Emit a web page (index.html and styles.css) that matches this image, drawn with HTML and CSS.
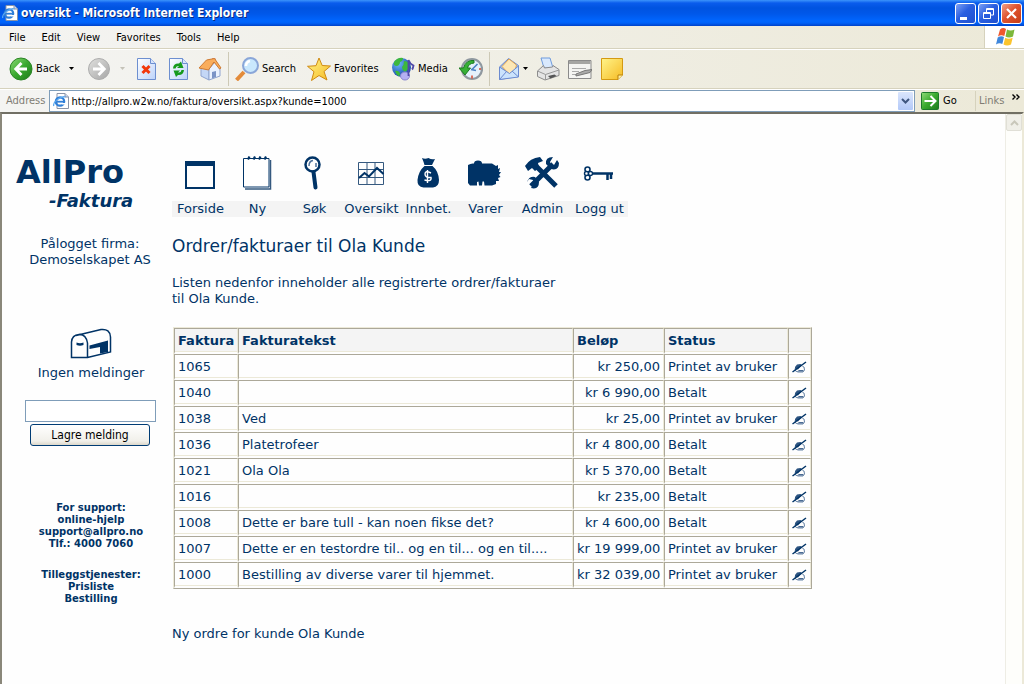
FILE: index.html
```
<!DOCTYPE html>
<html lang="no">
<head>
<meta charset="utf-8">
<title>oversikt</title>
<link rel="stylesheet" href="styles.css">
</head>
<body>
<svg class="defs" aria-hidden="true">
  <defs>
    <linearGradient id="gGreen" x1="0" y1="0" x2="1" y2="1"><stop offset="0" stop-color="#8fdc78"/><stop offset=".5" stop-color="#3aa92f"/><stop offset="1" stop-color="#1c7a1a"/></linearGradient>
    <linearGradient id="gGrey" x1="0" y1="0" x2="1" y2="1"><stop offset="0" stop-color="#e0e0de"/><stop offset="1" stop-color="#a6a6a6"/></linearGradient>
    <linearGradient id="gPage" x1="0" y1="0" x2="1" y2="1"><stop offset="0" stop-color="#ffffff"/><stop offset="1" stop-color="#bcd3fa"/></linearGradient>
    <linearGradient id="gGold" x1="0" y1="0" x2="1" y2="1"><stop offset="0" stop-color="#fff48a"/><stop offset="1" stop-color="#f6bb24"/></linearGradient>
    <radialGradient id="gGlobe" cx=".35" cy=".3" r=".8"><stop offset="0" stop-color="#6db6f5"/><stop offset="1" stop-color="#0c3fa5"/></radialGradient>
    <symbol id="iePage" viewBox="0 0 16 16"><path d="M4 .5h8l3.500 3.500v11.500H4z" fill="#fff" stroke="#8a94a8"/><path d="M12 .5V4h3.500" fill="#c9d6ee" stroke="#8a94a8"/><circle cx="7" cy="8.500" r="4.200" fill="none" stroke="#2f7fd8" stroke-width="2.200"/><path d="M4 8.700h7" stroke="#2f7fd8" stroke-width="1.800"/><path d="M9 10h4v1.500H9z" fill="#fff"/><path d="M.8 13C-.5 9 8 2.500 12.500 4" fill="none" stroke="#5aa7ee" stroke-width="1.300"/></symbol>
    <symbol id="hand" viewBox="0 0 15 12"><path d="M3 6 5 3.500 8.500 3l1.500 1-4 4.500-3-.5z" fill="#2b5380"/><path d="M3 7.500 3.500 10l2.500 1h5l1.500-2-.5-3-1.500-.5" fill="none" stroke="#6683a6"/><path d="M5 10.500h6l.5-1.500H7z" fill="#4a6b93"/><path d="M.5 11 14 1" stroke="#003366" stroke-width="1.500"/></symbol>
  </defs>
</svg>
<div class="window">
  <header class="titlebar">
    <svg class="i16" aria-hidden="true"><use href="#iePage"/></svg>
    <h1 class="title">oversikt - Microsoft Internet Explorer</h1>
    <div class="winbtns">
      <button class="winbtn" aria-label="Minimize"><svg viewBox="0 0 19 19"><path d="M4 13h7v3H4z" fill="#fff"/></svg></button>
      <button class="winbtn" aria-label="Restore"><svg viewBox="0 0 19 19"><path d="M7.500 8V4.500h7v6.500H12M7 5.500h8M4.500 8.500h7v6h-7zM4 9.500h8" fill="none" stroke="#fff"/></svg></button>
      <button class="winbtn winclose" aria-label="Close"><svg viewBox="0 0 19 19"><path d="m5 5 9 9M14 5l-9 9" stroke="#fff" stroke-width="2.200"/></svg></button>
    </div>
  </header>
  <div class="menubar">
    <button class="m">File</button><button class="m">Edit</button><button class="m">View</button><button class="m">Favorites</button><button class="m">Tools</button><button class="m">Help</button>
    <div class="flag"><svg viewBox="0 0 22 20" aria-hidden="true"><path d="M5 2.500q3-2.500 6-.5L9.300 9Q6 7.500 3 9.500z" fill="#f0582c"/><path d="M12 2.500q3.500 2 7.500 0L18 9.500q-4 2-7.500 0z" fill="#7cb83a"/><path d="M2.700 10.500q3.500-2 6.300-.5l-1.700 7q-3-1.500-6.300.5z" fill="#3f87dc"/><path d="M10.200 10.700q3.500 2 7.500 0L16 17.500q-4 2-7.500 0z" fill="#fbc42d"/></svg></div>
  </div>
  <div class="toolbar">
    <button class="tb"><svg class="i24" viewBox="0 0 24 24"><circle cx="12" cy="12" r="11" fill="url(#gGreen)" stroke="#2c8526"/><path d="M18 12H7m5.500-6L6.700 12l5.800 6" fill="none" stroke="#fff" stroke-width="2.800"/></svg>Back</button>
    <button class="drop" aria-label="Back history"><svg viewBox="0 0 7 4"><path d="M1 0h5L3.500 3z"/></svg></button>
    <button class="tb" aria-label="Forward"><svg class="i24" viewBox="0 0 24 24"><circle cx="12" cy="12" r="10.500" fill="url(#gGrey)" stroke="#adadad"/><path d="M6 12h11m-5.500-6 5.800 6-5.800 6" fill="none" stroke="#fff" stroke-width="2.800"/></svg></button>
    <button class="drop near off" aria-label="Forward history"><svg viewBox="0 0 7 4"><path d="M1 0h5L3.500 3z"/></svg></button>
    <button class="tb" aria-label="Stop"><svg class="i24" viewBox="0 0 24 24"><path d="M1.500 1.500h13l5 5v16h-18z" fill="url(#gPage)" stroke="#6d8fd0"/><path d="M14.500 1.500v5h5" fill="#d7e4fb" stroke="#6d8fd0"/><path d="m6.500 9 7 7M13.500 9l-7 7" stroke="#f2380c" stroke-width="3"/></svg></button>
    <button class="tb" aria-label="Refresh"><svg class="i24" viewBox="0 0 24 24"><path d="M1.500 1.500h13l5 5v16h-18z" fill="url(#gPage)" stroke="#6d8fd0"/><path d="M14.500 1.500v5h5" fill="#d7e4fb" stroke="#6d8fd0"/><path d="M5 11.500Q5.500 6 11 6.500L13 4.500l2.500 6.500H9l2-2q-3-.5-3.500 2.500zM16 13q-.5 5.500-6 5L8 20l-2.500-6.500H12l-2 2q3 .5 3.500-2.500z" fill="#169a1d"/></svg></button>
    <button class="tb" aria-label="Home"><svg class="i24" viewBox="0 0 24 24"><path d="M14 1.500h3.500V7H14z" fill="#b8452a"/><path d="M3 11v8l8 4V11L7 6z" fill="#c4d7f6" stroke="#8fa4cf"/><path d="m11 23 11-4v-8l-5-6-6 7z" fill="#eaf2fe" stroke="#8fa4cf"/><path d="M14 15v6.500l4-1.500v-6z" fill="#7b94c6"/><path d="M1 11 8.500 3 16.500 1.500 23 11l-1.500 1L16 5l-5.500 8z" fill="#f9ad5c" stroke="#cf7b33"/></svg></button>
    <span class="sep"></span>
    <button class="tb"><svg class="i24" viewBox="0 0 24 24"><path d="m9 15-7.500 8" stroke="#e38b3a" stroke-width="4"/><circle cx="15.500" cy="8.500" r="7.500" fill="#c9e8fd" stroke="#8aa6d8" stroke-width="2"/><path d="M11 9q0-4 4-5" fill="none" stroke="#fff" stroke-width="2.500"/></svg>Search</button>
    <button class="tb"><svg class="i24" viewBox="0 0 24 24"><path d="m12 1 3.200 7.500 8.300.5-6.500 5.500 3 8.500-8-4.500-7.500 5 2.500-8.800L.5 9.300 9 8.700z" fill="url(#gGold)" stroke="#cf8a12"/></svg>Favorites</button>
    <button class="tb"><svg class="i24" viewBox="0 0 24 24"><circle cx="10.500" cy="10.500" r="9.500" fill="url(#gGlobe)"/><path d="M3 5q4-5 9-4 0 3-3 4 0 3-3 4Q2 9 3 5zM13 4q4 0 5.500 4-1 5-4.500 7-3-2-3-5 2-2 2-6zM4 14q3-1 5 2 0 2-1 3.500Q5 18 4 14z" fill="#3db83c"/><ellipse cx="14" cy="19" rx="4.500" ry="4" fill="#b5b0f2" stroke="#8a85cf"/><path d="M17.500 19V3q1.500 4 5 5.500-.5 3-1.500 4" fill="none" stroke="#5149a8" stroke-width="1.800"/></svg>Media</button>
    <button class="tb" aria-label="History"><svg class="i24" viewBox="0 0 24 24"><circle cx="13" cy="12" r="10" fill="#e5f1fb" stroke="#8f989f" stroke-width="2.200"/><path d="M13 12.500 18.500 7M12 12.500l5 1" stroke="#4c82c4" stroke-width="1.600"/><path d="M13 18.500v3M20 12h2" stroke="#d9472b" stroke-width="1.500"/><path d="M15 3.500Q7 2.500 4.500 11H0l6 7 5.500-7H8.500q1-4.500 6.500-5z" fill="#37b035" stroke="#1c7a23"/></svg></button>
    <span class="sep"></span>
    <button class="tb" aria-label="Mail"><svg class="i24" viewBox="0 0 24 24"><path d="m1.500 10 9-8.500 10 7v11l-19 3z" fill="#9fc4f6" stroke="#6c8bd0"/><path d="m4 9.500 7-7.500 7.500 6-1.500 5.500-6 3.500z" fill="#fde7b5" stroke="#e2a34d"/><path d="m1.500 10 10 6.500L20.500 9v11l-19 2.500z" fill="#cbe3fc" stroke="#6c8bd0"/><path d="m2 22 6.500-7.500M20 19.500 14 14" stroke="#6c8bd0"/></svg></button>
    <button class="drop near" aria-label="Mail menu"><svg viewBox="0 0 7 4"><path d="M1 0h5L3.500 3z"/></svg></button>
    <button class="tb" aria-label="Print"><svg class="i24" viewBox="0 0 24 24"><path d="M5 1h9l3 10H8z" fill="#d9e9fd" stroke="#6f9bdd"/><path d="m1.500 14 6-5.500L8.500 11l8-1 .5-1.500 6 4v6L9 23l-7.500-3.500z" fill="#e4e4e4" stroke="#8c8c8c"/><path d="m1.500 14 8 3.500L23 13M9.500 17.500V23" fill="none" stroke="#999"/><path d="m12 19 6.500-1.500 2 1.500-6 2.500z" fill="#555"/></svg></button>
    <button class="tb" aria-label="Edit"><svg class="i24" viewBox="0 0 24 24"><path d="M.5 3.500h22.500v18H.5z" fill="#f4f4f2" stroke="#8b8b8b"/><path d="M1 4h21.500v3H1z" fill="#a5a5a3"/><path d="M4 11.500h14M4 14.500h7M4 17.500h5" stroke="#aaa"/><path d="m8 17 9-3.500 7-1-2 3-6 1.500-8 2z" fill="#aaa" stroke="#777"/></svg></button>
    <button class="tb" aria-label="Discuss"><svg class="i24" viewBox="0 0 24 24"><path d="M1.500 1.500h21v16.500l-4.500 4.500H1.500z" fill="url(#gGold)" stroke="#d49a12"/><path d="M18 22.500V18h4.500" fill="#fff0a0" stroke="#b77e0b"/></svg></button>
  </div>
  <form class="addressbar">
    <label class="grey" for="addr">Address</label>
    <div class="addrbox">
      <svg class="i16" aria-hidden="true"><use href="#iePage"/></svg>
      <input id="addr" class="addr" type="text" value="http://allpro.w2w.no/faktura/oversikt.aspx?kunde=1000">
      <button class="addrdrop" type="button" aria-label="Show addresses"><svg viewBox="0 0 9 6"><path d="m1 1 3.500 3.500L8 1" fill="none" stroke="#3f567f" stroke-width="2"/></svg></button>
    </div>
    <button class="go" type="button"><svg viewBox="0 0 18 18"><rect x=".5" y=".5" width="17" height="17" rx="1" fill="url(#gGreen)" stroke="#1c7a2a"/><path d="M3.500 9H14M9.500 4l5 5-5 5" fill="none" stroke="#fff" stroke-width="2"/></svg>Go</button>
    <span class="links grey">Links</span>
    <button class="more" type="button" aria-label="More links"><svg viewBox="0 0 8 6"><path d="m.5.500 2.500 2.500L.5 5.500M4.500.5 7 3 4.500 5.500" fill="none" stroke="#000" stroke-width="1.400"/></svg></button>
  </form>
  <div class="viewport">
    <div class="page">
      <aside class="side">
        <div class="brand">AllPro</div>
        <div class="product">-Faktura</div>
        <p class="login">Pålogget firma:<br>Demoselskapet AS</p>
        <div class="mail">
          <svg class="mailbox" viewBox="0 0 42 31" aria-hidden="true"><path d="M1.500 29.500V14Q2 7 9 6.500T17.500 15v14.500zM6 7.500 31 1.500q9-1 9.500 7.500V24l-23 5.500" fill="none" stroke="#003366" stroke-width="1.500"/><path d="M6.500 14.500q3.500 1.500 7 0V17q-3.500 1.500-7 0zM19.500 17.500 38 12.500V24l-8 1.500V19l-10.500 2z" fill="#003366"/></svg>
          <a href="#meldinger">Ingen meldinger</a>
        </div>
        <form class="note">
          <input class="field" type="text" aria-label="Melding">
          <button class="save" type="button">Lagre melding</button>
        </form>
        <div class="help">For support:<br><a href="#hjelp">online-hjelp</a><br><a href="#epost">support@allpro.no</a><br>Tlf.: 4000 7060</div>
        <div class="help">Tilleggstjenester:<br><a href="#prisliste">Prisliste</a><br><a href="#bestilling">Bestilling</a></div>
      </aside>
      <main class="main">
        <nav class="nav">
          <a class="navitem" href="#forside"><svg class="nicon" viewBox="0 0 40 40"><path d="M5 7h30v28H5zM7 12v21h26V12z" fill="#003366" fill-rule="evenodd"/></svg><span class="navlabel">Forside</span></a>
          <a class="navitem" href="#ny"><svg class="nicon" viewBox="0 0 40 40"><path d="M6.500 4.500h25.500v28.500H6.500z" fill="#fff" stroke="#003366"/><path d="M8 35h25.500V6" fill="none" stroke="#35597f" stroke-width="1.500"/><path d="m11 5.500 1.500-3M16.500 5.500l1.500-3M22 5.500l1.500-3M27.500 5.500l1.500-3" stroke="#003366" stroke-width="2.200"/></svg><span class="navlabel">Ny</span></a>
          <a class="navitem" href="#sok"><svg class="nicon" viewBox="0 0 40 40"><ellipse cx="18.500" cy="10.500" rx="7" ry="7" fill="none" stroke="#003366" stroke-width="2.500"/><path d="M15 12q0-5 4-5.500M22 9v4" fill="none" stroke="#4e719a" stroke-width="1.500"/><path d="m19.500 18 2 15.500" stroke="#003366" stroke-width="4" stroke-linecap="round"/></svg><span class="navlabel">Søk</span></a>
          <a class="navitem" href="#oversikt"><svg class="nicon" viewBox="0 0 40 40"><path d="M7.500 8.500h25v22h-25zM16 8v22M24 8v22M8 15.500h24M8 23.500h24" fill="none" stroke="#35597f"/><path d="m8 24 5.500-5 4.500 3.500L26 14l6.500 6" fill="none" stroke="#003366" stroke-width="2"/></svg><span class="navlabel">Oversikt</span></a>
          <a class="navitem" href="#innbet"><svg class="nicon" viewBox="0 0 40 40"><path d="M14 4q3 1.500 6.500 0 3 2 6.500 1-1.500 3-3 6h-7.500q-1-3.500-2.500-7zM16.500 12h8q6 5 6.500 14 0 7-6 7.500H15.500Q9 33 9.500 26q1-9 7-14z" fill="#003366"/><path d="M23 19q-6-3-6 1t6 3.500q1 4.500-6.500 2.500M19.500 16v13" fill="none" stroke="#fff" stroke-width="1.400"/></svg><span class="navlabel">Innbet.</span></a>
          <a class="navitem" href="#varer"><svg class="nicon" viewBox="0 0 40 40"><path d="M3 11q3-2 6-1.500 0-3 4-3t4 3h10l4 2.500 2-1v4l2-1-1 4h2l-2 3 1.500 2-2.500 1 1 3h-3v3l-4 1.500H19.500l-.5-4h-1.500l-.5 4h-3l-.5-4-1.500.5v3.500L5 31.500 3 29z" fill="#003366"/></svg><span class="navlabel">Varer</span></a>
          <a class="navitem" href="#admin"><svg class="nicon" viewBox="0 0 40 40"><path d="m13 11 21 21M31 10 9 32" stroke="#003366" stroke-width="5"/><path d="M3 12Q8 4 18 3l3 4-5 2 1 5-4 3-3-3-4 3zM35 6l-3 5h-3l-1-3 3-5q-8 0-7 7l5 5q8 2 8-6zM7 25l4 1 1 3-3 5q8 2 8-6l-4-5q-6-1-8 5z" fill="#003366"/></svg><span class="navlabel">Admin</span></a>
          <a class="navitem" href="#loggut"><svg class="nicon" viewBox="0 0 40 40"><path d="M13 19.500h21" stroke="#003366" stroke-width="2.500"/><path d="M28.500 20v6M32 20v5" stroke="#003366" stroke-width="2.500"/><circle cx="8.500" cy="15.500" r="2.500" fill="none" stroke="#003366" stroke-width="1.600"/><circle cx="8.500" cy="23.500" r="2.500" fill="none" stroke="#003366" stroke-width="1.600"/><circle cx="7.500" cy="19.500" r="2" fill="#fff" stroke="#003366" stroke-width="1.400"/><circle cx="11.500" cy="19.500" r="2" fill="#fff" stroke="#003366" stroke-width="1.400"/></svg><span class="navlabel">Logg ut</span></a>
        </nav>
        <h2 class="heading">Ordrer/fakturaer til Ola Kunde</h2>
        <p class="intro">Listen nedenfor inneholder alle registrerte ordrer/fakturaer<br>til Ola Kunde.</p>
        <table class="orders">
          <colgroup><col class="c-no"><col class="c-text"><col class="c-sum"><col class="c-status"><col class="c-edit"></colgroup>
          <thead><tr><th>Faktura</th><th>Fakturatekst</th><th>Beløp</th><th>Status</th><th></th></tr></thead>
          <tbody>
            <tr><td>1065</td><td></td><td class="sum">kr 250,00</td><td>Printet av bruker</td><td><a href="#o1065" aria-label="Rediger 1065"><svg class="hand"><use href="#hand"/></svg></a></td></tr>
            <tr><td>1040</td><td></td><td class="sum">kr 6 990,00</td><td>Betalt</td><td><a href="#o1040" aria-label="Rediger 1040"><svg class="hand"><use href="#hand"/></svg></a></td></tr>
            <tr><td>1038</td><td>Ved</td><td class="sum">kr 25,00</td><td>Printet av bruker</td><td><a href="#o1038" aria-label="Rediger 1038"><svg class="hand"><use href="#hand"/></svg></a></td></tr>
            <tr><td>1036</td><td>Platetrofeer</td><td class="sum">kr 4 800,00</td><td>Betalt</td><td><a href="#o1036" aria-label="Rediger 1036"><svg class="hand"><use href="#hand"/></svg></a></td></tr>
            <tr><td>1021</td><td>Ola Ola</td><td class="sum">kr 5 370,00</td><td>Betalt</td><td><a href="#o1021" aria-label="Rediger 1021"><svg class="hand"><use href="#hand"/></svg></a></td></tr>
            <tr><td>1016</td><td></td><td class="sum">kr 235,00</td><td>Betalt</td><td><a href="#o1016" aria-label="Rediger 1016"><svg class="hand"><use href="#hand"/></svg></a></td></tr>
            <tr><td>1008</td><td>Dette er bare tull - kan noen fikse det?</td><td class="sum">kr 4 600,00</td><td>Betalt</td><td><a href="#o1008" aria-label="Rediger 1008"><svg class="hand"><use href="#hand"/></svg></a></td></tr>
            <tr><td>1007</td><td>Dette er en testordre til.. og en til... og en til....</td><td class="sum">kr 19 999,00</td><td>Printet av bruker</td><td><a href="#o1007" aria-label="Rediger 1007"><svg class="hand"><use href="#hand"/></svg></a></td></tr>
            <tr><td>1000</td><td>Bestilling av diverse varer til hjemmet.</td><td class="sum">kr 32 039,00</td><td>Printet av bruker</td><td><a href="#o1000" aria-label="Rediger 1000"><svg class="hand"><use href="#hand"/></svg></a></td></tr>
          </tbody>
        </table>
        <a class="neworder" href="#nyordre">Ny ordre for kunde Ola Kunde</a>
      </main>
    </div>
    <div class="scroll"><button class="up" aria-label="Scroll up"><svg viewBox="0 0 9 6"><path d="m1 5 3.500-3.500L8 5" fill="none" stroke="#c9c7ba" stroke-width="2"/></svg></button></div>
  </div>
</div>
</body>
</html>
```
FILE: styles.css
```
* { box-sizing: border-box; }
body { margin: 0; background: #fefefe; color: #003366; font: 13px/16px "DejaVu Sans", Verdana, sans-serif; }
a { color: inherit; text-decoration: none; }
button { border: 0; padding: 0; margin: 0; background: none; color: #000; font: inherit; }
p, h1, h2 { margin: 0; font-weight: normal; }
svg { display: block; flex: none; }
.defs { position: absolute; width: 0; height: 0; }
.window { display: flex; flex-direction: column; min-height: 100vh; }
.i16 { width: 16px; height: 16px; }
.i24 { width: 24px; height: 24px; }

.titlebar { display: flex; align-items: center; height: 26px; padding: 0 2px 0 2px; background: linear-gradient(#3c94fb 0, #0a5cec 3px, #0053e0 8px, #0058ea 14px, #0066ff 21px, #0061f8 23px, #0042c8 26px); }
.title { flex: 1; margin-left: 3px; color: #fff; font: bold 12px/16px "DejaVu Sans Condensed", Tahoma, sans-serif; text-shadow: 1px 1px #0a2a80; white-space: nowrap; }
.winbtns { display: flex; gap: 2px; }
.winbtn { width: 21px; height: 21px; border: 1px solid #fff; border-radius: 3px; background: linear-gradient(135deg, #7ca0f5, #2a5fe0 45%, #1f50cf); }
.winclose { background: linear-gradient(135deg, #f0a088, #e0542f 45%, #c53d18); }

.menubar, .toolbar, .addressbar { background: linear-gradient(90deg, #f4f4f2, #ece9d8); color: #000; font: 11px/14px "DejaVu Sans Condensed", Tahoma, sans-serif; border-bottom: 1px solid #d6d2bd; }
.menubar { display: flex; height: 23px; padding-left: 3px; }
.m { padding: 1px 6px 0; margin-right: 4px; }
.flag { display: flex; align-items: center; width: 40px; margin-left: auto; padding-left: 10px; background: #fff; border-left: 1px solid #d6d2bd; }
.flag svg { width: 22px; height: 20px; }
.toolbar { display: grid; grid-template-columns: 56px 22px 32px 17px 32px 30px 30px 7px 72px 84px 68px 30px 9px 24px 14px 32px 32px 32px; align-items: center; height: 40px; padding-left: 9px; border-top: 1px solid #fff; }
.tb { display: flex; align-items: center; gap: 3px; }
.drop { padding-left: 3px; }
.drop svg { width: 7px; height: 4px; }
.near { padding-left: 0; }
.off svg { fill: #c4c2b8; }
.sep { width: 1px; height: 34px; background: #cdc9b6; }
.addressbar { display: flex; align-items: center; height: 23px; padding-left: 6px; border-top: 1px solid #fff; border-bottom: 0; }
.grey { color: #7f7c73; }
.addrbox { display: flex; flex: 1; align-items: center; height: 22px; margin-left: 4px; padding: 0 1px 0 3px; background: #fff; border: 1px solid #7f9db9; }
.addr { flex: 1; min-width: 0; height: 18px; border: 0; padding: 0 0 0 2px; background: none; color: #000; font: inherit; }
.addrdrop { display: flex; align-items: center; justify-content: center; width: 15px; height: 18px; background: linear-gradient(#dbe6fd, #b3c9f8); border-radius: 1px; }
.addrdrop svg, .up svg { width: 9px; height: 6px; }
.go { display: flex; align-items: center; gap: 4px; width: 54px; margin-left: 6px; }
.go svg { width: 18px; height: 18px; }
.links { width: 37px; padding-left: 3px; border-left: 1px solid #d6d2bd; line-height: 20px; }
.more { align-self: flex-start; padding: 4px 4px 0 0; }
.more svg { width: 8px; height: 6px; }

.viewport { display: flex; flex: 1; border-top: 2px solid #716f64; border-left: 2px solid #8a877a; border-right: 2px solid #ece9d8; }
.scroll { width: 17px; background: #fefefb; border-left: 1px solid #eeede5; }
.up { display: flex; align-items: center; justify-content: center; width: 16px; height: 17px; background: #f0efe8; border: 1px solid #e0dfd6; border-radius: 2px; }
.page { display: flex; flex: 1; gap: 2px; padding: 40px 8px; }
.side { width: 160px; flex: none; text-align: center; }
.brand { padding-left: 6px; text-align: left; font: bold 32px/36px "DejaVu Sans", Verdana, sans-serif; }
.product { padding-left: 39px; text-align: left; font: italic bold 18px/22px "DejaVu Sans", Verdana, sans-serif; }
.login { margin-top: 24px; }
.mail { display: flex; flex-direction: column; align-items: center; gap: 6px; margin-top: 60px; padding-left: 2px; }
.mailbox { width: 42px; height: 31px; }
.note { display: flex; flex-direction: column; align-items: center; gap: 2px; margin: 19px 0 56px; }
.field { width: 131px; height: 22px; border: 1px solid #7f9db9; background: #fff; font: inherit; }
.save { width: 120px; height: 22px; border: 1px solid #003c74; border-radius: 3px; background: linear-gradient(#fff, #f1f0ea 80%, #dcd8cb); font: 12px/16px "DejaVu Sans Condensed", Tahoma, sans-serif; }
.help { margin-bottom: 19px; padding-left: 2px; font-weight: bold; font-size: 10px; line-height: 12px; }

.main { flex: 1; min-width: 0; }
.nav { display: grid; grid-template-columns: repeat(8, 57px); }
.navitem { display: flex; flex-direction: column; align-items: center; gap: 7px; white-space: nowrap; }
.nicon { width: 40px; height: 40px; margin-right: 2px; }
.navlabel { align-self: stretch; background: #f4f4f4; text-align: center; }
.heading { margin-top: 19px; font-size: 17px; line-height: 20px; }
.intro { margin-top: 19px; }
.orders { margin: 20px 0 0 1px; table-layout: fixed; width: 639px; border: 1px solid; border-color: #ece9d8 #aca899 #aca899 #ece9d8; border-spacing: 0; }
.c-no { width: 64px; }
.c-text { width: 335px; }
.c-sum { width: 91px; }
.c-status { width: 124px; }
.c-edit { width: 23px; }
.orders th, .orders td { height: 26px; padding: 4px 3px 3px; border: solid; border-width: 1px 1px 2px; border-color: #aca899 #ece9d8 #fefefe #aca899; box-shadow: inset 0 -1px #ece9d8; text-align: left; white-space: nowrap; }
.orders th { background: #f4f4f4; background-clip: padding-box; }
.orders .sum { text-align: right; }
.hand { width: 15px; height: 12px; }
.neworder { display: inline-block; margin-top: 37px; }
```
